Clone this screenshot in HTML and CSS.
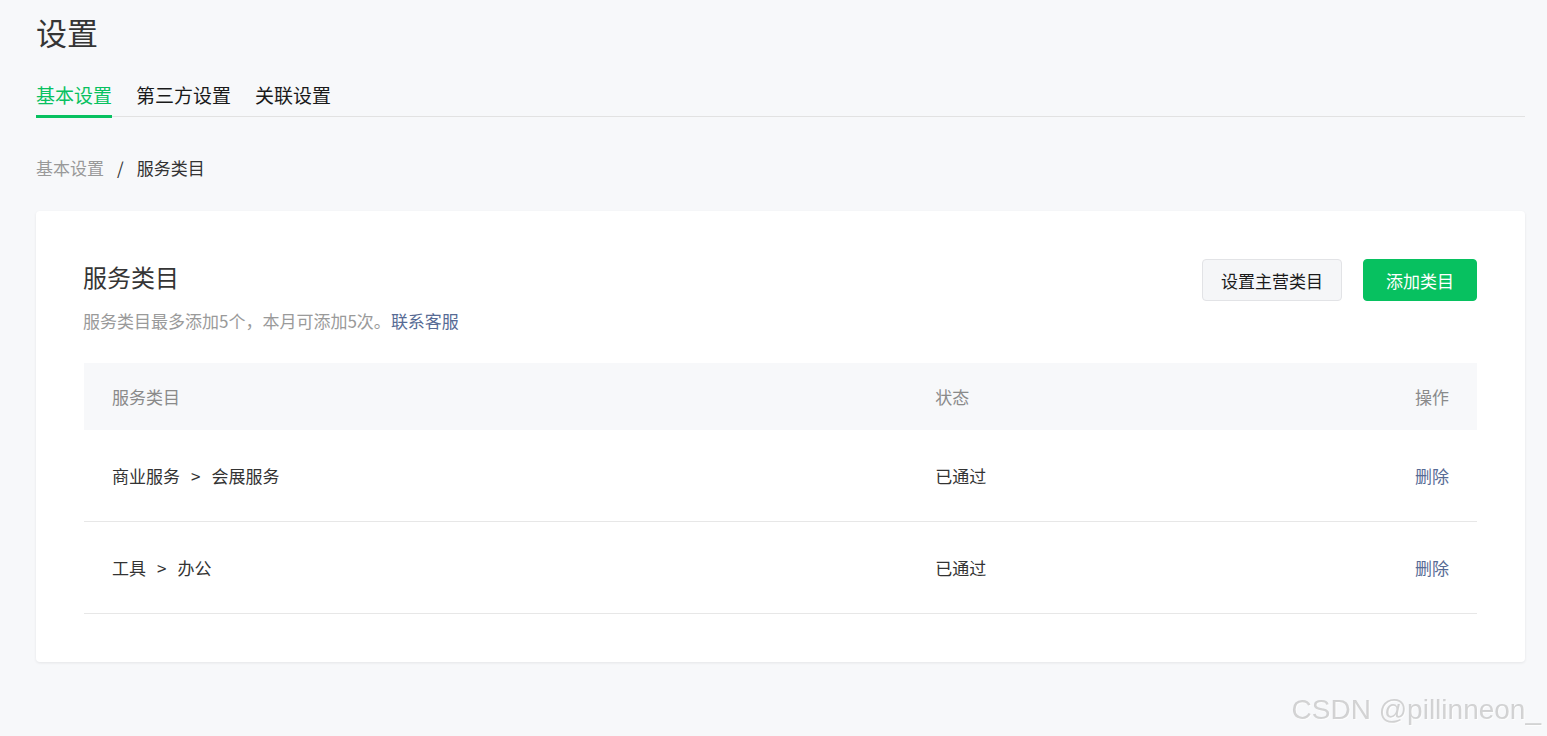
FILE: index.html
```html
<!DOCTYPE html>
<html lang="zh-CN">
<head>
  <meta charset="UTF-8">
  <title>设置</title>
  <link rel="stylesheet" href="styles.css">
</head>
<body>
  <div class="page">
    <h1 class="page-title">设置</h1>
    <nav class="tabs">
      <a class="tab active">基本设置</a>
      <a class="tab">第三方设置</a>
      <a class="tab">关联设置</a>
    </nav>
    <div class="breadcrumb">
      <span class="crumb-prev">基本设置</span><span class="crumb-sep">/</span><span class="crumb-cur">服务类目</span>
    </div>
    <section class="card">
      <div class="card-head">
        <div>
          <h2 class="card-title">服务类目</h2>
          <p class="card-desc">服务类目最多添加5个，本月可添加5次。<a class="link">联系客服</a></p>
        </div>
        <div class="actions">
          <button class="btn btn-default">设置主营类目</button>
          <button class="btn btn-primary">添加类目</button>
        </div>
      </div>
      <div class="table">
        <div class="row head">
          <div>服务类目</div>
          <div>状态</div>
          <div class="op">操作</div>
        </div>
        <div class="row">
          <div>商业服务<span class="arrow">&gt;</span>会展服务</div>
          <div>已通过</div>
          <div class="op"><a class="link">删除</a></div>
        </div>
        <div class="row">
          <div>工具<span class="arrow">&gt;</span>办公</div>
          <div>已通过</div>
          <div class="op"><a class="link">删除</a></div>
        </div>
      </div>
    </section>
  </div>
  <div class="watermark">CSDN @pillinneon_</div>
</body>
</html>
```

FILE: styles.css
```css
body {
  margin: 0;
  background: #f7f8fa;
  color: #333;
  font-family: "Noto Sans CJK SC", "Noto Sans", sans-serif;
  font-size: 17px;
  min-height: 100vh;
}
.page {
  padding: 10px 22px 0 36px;
}
.page-title {
  margin: 0;
  font-size: 31px;
  font-weight: 400;
  line-height: 44px;
  color: #353535;
}
.tabs {
  display: flex;
  gap: 24px;
  margin-top: 28px;
  border-bottom: 1px solid #e2e2e2;
}
.tab {
  font-size: 19px;
  line-height: 26px;
  padding-bottom: 7px;
  color: #1a1a1a;
  border-bottom: 3px solid transparent;
  margin-bottom: -2px;
  cursor: pointer;
}
.tab.active {
  color: #07c160;
  border-bottom-color: #07c160;
}
.breadcrumb {
  margin-top: 38px;
  line-height: 26px;
}
.crumb-prev {
  color: #999;
}
.crumb-sep {
  color: #333;
  margin: 0 13px 0 13px;
}
.crumb-cur {
  color: #333;
}
.card {
  margin-top: 30px;
  background: #fff;
  border-radius: 4px;
  box-shadow: 0 1px 3px rgba(0, 0, 0, 0.08);
  padding: 48px 48px 48px 47px;
}
.card-head {
  display: flex;
  justify-content: space-between;
  align-items: flex-start;
}
.card-title {
  margin: 0;
  font-size: 24px;
  font-weight: 400;
  line-height: 36px;
  color: #353535;
}
.card-desc {
  margin: 14px 0 0 0;
  line-height: 24px;
  color: #9a9a9a;
}
.link {
  color: #576b95;
  cursor: pointer;
}
.actions {
  display: flex;
  gap: 21px;
}
.btn {
  height: 42px;
  padding: 0 18px;
  min-width: 114px;
  border-radius: 4px;
  font-family: inherit;
  font-size: 17px;
  cursor: pointer;
}
.btn-default {
  background: #f5f6f8;
  color: #1a1a1a;
  border: 1px solid #e2e3e6;
}
.btn-primary {
  background: #07c160;
  color: #fff;
  border: 1px solid #07c160;
}
.table {
  margin-top: 30px;
  margin-left: 1px;
}
.row {
  display: grid;
  grid-template-columns: 59.4% 1fr auto;
  align-items: center;
  height: 91px;
  padding: 0 28px 0 28px;
  border-bottom: 1px solid #e7e7e7;
  color: #333;
}
.row > div + div {
  padding-left: 29px;
}
.row.head {
  height: 67px;
  background: #f7f8fa;
  color: #8a8a8a;
  border-bottom: none;
}
.op {
  text-align: right;
}
.arrow {
  margin: 0 11px;
}
.watermark {
  position: fixed;
  right: 6px;
  bottom: 10px;
  font-family: "Liberation Sans", Arial, sans-serif;
  font-size: 28px;
  color: rgba(160, 160, 160, 0.45);
  text-shadow: 1px 1px 1px rgba(255, 255, 255, 0.8);
  pointer-events: none;
}
```
